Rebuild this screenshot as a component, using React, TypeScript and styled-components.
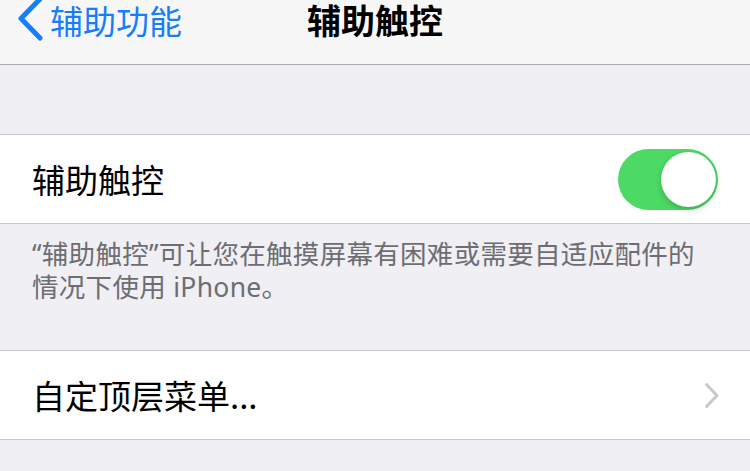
import styled, { createGlobalStyle } from "styled-components";

const GlobalStyle = createGlobalStyle`
  html, body {
    margin: 0;
    padding: 0;
    background: #efeff4;
  }
  body {
    font-family: "Noto Sans CJK SC", "Noto Sans", sans-serif;
    -webkit-font-smoothing: antialiased;
  }
`;

const App = () => {
  return (
    <Page>
      <GlobalStyle />
      <NavBar>
        <BackButton>
          <svg width="28" height="46" viewBox="0 0 28 46">
            <polyline
              points="24,3 5,22.5 24,42"
              fill="none"
              stroke="#147efb"
              strokeWidth="5"
              strokeLinecap="round"
              strokeLinejoin="round"
            />
          </svg>
          <BackLabel>辅助功能</BackLabel>
        </BackButton>
        <Title>辅助触控</Title>
        <div />
      </NavBar>

      <Group $gap={69}>
        <Row>
          <Label>辅助触控</Label>
          <Toggle>
            <Knob />
          </Toggle>
        </Row>
      </Group>
      <Footer>
        “辅助触控”可让您在触摸屏幕有困难或需要自适应配件的
        <br />
        情况下使用 iPhone。
      </Footer>

      <Group $gap={0}>
        <Row>
          <Label>自定顶层菜单...</Label>
          <svg width="16" height="27" viewBox="0 0 16 27">
            <polyline
              points="2.5,2.5 13,13.5 2.5,24.5"
              fill="none"
              stroke="#c7c7cc"
              strokeWidth="3"
              strokeLinecap="round"
              strokeLinejoin="round"
            />
          </svg>
        </Row>
      </Group>
    </Page>
  );
};

export default App;

const Page = styled.div`
  width: 750px;
  height: 471px;
  overflow: hidden;
  background: #efeff4;
`;

const NavBar = styled.div`
  height: 64px;
  display: grid;
  grid-template-columns: 1fr auto 1fr;
  align-items: start;
  background: #f7f7f8;
  border-bottom: 1px solid #a9a9ad;
`;

const BackButton = styled.div`
  display: flex;
  align-items: flex-start;
  padding-left: 16px;
  gap: 6px;

  svg {
    margin-top: -4px;
    flex-shrink: 0;
  }
`;

const BackLabel = styled.span`
  font-size: 33px;
  line-height: 40px;
  color: #147efb;
`;

const Title = styled.div`
  font-size: 34px;
  line-height: 40px;
  font-weight: 700;
  color: #000;
`;

const Group = styled.div<{ $gap: number }>`
  margin-top: ${(p) => p.$gap}px;
  background: #fff;
  border-top: 1px solid #c8c7cc;
  border-bottom: 1px solid #c8c7cc;
`;

const Row = styled.div`
  height: 88px;
  display: flex;
  align-items: center;
  justify-content: space-between;
  padding: 0 30px 0 32px;
`;

const Label = styled.span`
  font-size: 33px;
  color: #000;
  line-height: 40px;
`;

const Toggle = styled.div`
  position: relative;
  width: 100px;
  height: 61px;
  margin-right: 2px;
  border-radius: 31px;
  background: #4cd964;
`;

const Knob = styled.div`
  position: absolute;
  top: 3px;
  right: 2px;
  width: 55px;
  height: 55px;
  border-radius: 50%;
  background: #fff;
  box-shadow: 0 3px 6px rgba(0, 0, 0, 0.18), 0 0 1px rgba(0, 0, 0, 0.2);
`;

const Footer = styled.p`
  margin: 0;
  height: 126px;
  box-sizing: border-box;
  padding: 14px 20px 0 32px;
  font-family: "Noto Sans", "Noto Sans CJK SC", sans-serif;
  font-size: 26.5px;
  line-height: 33px;
  letter-spacing: 0.3px;
  color: #6d6d72;
  white-space: nowrap;
`;
